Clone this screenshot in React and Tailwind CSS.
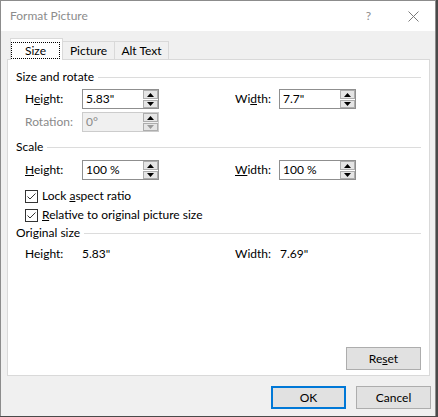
import React from 'react'

const font = "font-['Lato',sans-serif]"

function Arrow({ up, color }) {
  return (
    <svg width="7" height="4" viewBox="0 0 7 4">
      {up ? <path d="M0 4 L3.5 0 L7 4 Z" fill={color} /> : <path d="M0 0 L3.5 4 L7 0 Z" fill={color} />}
    </svg>
  )
}

function SpinBox({ value, disabled, downGray }) {
  return (
    <div
      className={`w-[77px] h-[20px] flex items-center border ${
        disabled ? 'border-[#cccccc] bg-[#f0f0f0]' : 'border-[#8f8f8f] bg-white'
      }`}
    >
      <span className={`flex-1 pl-[3px] leading-none ${disabled ? 'text-[#8a8a8a]' : 'text-black'}`}>{value}</span>
      <div className="flex flex-col w-[15px] h-[18px] gap-px">
        <div className="h-[9px] flex items-center justify-center border border-[#adadad] bg-[#e5e5e5]">
          <Arrow up color="#000" />
        </div>
        <div className="h-[8px] flex items-center justify-center border border-[#adadad] bg-[#e5e5e5]">
          <Arrow color={downGray ? '#9a9a9a' : '#000'} />
        </div>
      </div>
    </div>
  )
}

function Section({ title }) {
  return (
    <div className="flex items-center h-[16px] pl-[8px] pr-[8px] gap-[4px]">
      <span className="text-black">{title}</span>
      <div className="flex-1 h-px bg-[#dcdcdc]" />
    </div>
  )
}

function Check({ children }) {
  return (
    <div className="flex items-center h-[16px] pl-[17px] gap-[4px]">
      <div className="w-[13px] h-[13px] border border-[#333333] bg-white flex items-center justify-center">
        <svg width="11" height="11" viewBox="0 0 11 11">
          <path d="M1.5 5.5 L4 8 L9.5 2.5" fill="none" stroke="#333" strokeWidth="1" />
        </svg>
      </div>
      <span>{children}</span>
    </div>
  )
}

function Btn({ children, primary }) {
  return (
    <div
      className={`w-[75px] h-[23px] flex items-center justify-center bg-[#e1e1e1] ${
        primary ? 'border-2 border-[#0078d7]' : 'border border-[#adadad]'
      }`}
    >
      {children}
    </div>
  )
}

export default function App() {
  return (
    <div className={`w-[438px] h-[417px] bg-[#4a4a4a] text-[12px] text-black ${font}`}>
      <div className="w-[436px] h-[416px] flex flex-col border-l border-t border-r border-[#8c8c8c] bg-[#f0f0f0]">
        {/* Title bar */}
        <div className="h-[30px] bg-white flex items-center pl-[9px] pr-[16px]">
          <span className="flex-1 text-[#8c8c8c]">Format Picture</span>
          <span className="text-[#8c8c8c] mr-[37px]">?</span>
          <svg width="11" height="11" viewBox="0 0 11 11">
            <path d="M0.5 0.5 L10.5 10.5 M10.5 0.5 L0.5 10.5" stroke="#7a7a7a" strokeWidth="1" />
          </svg>
        </div>

        {/* Tabs + panel */}
        <div className="flex flex-col px-[6px]">
          <div className="h-[28px] flex items-end pl-[3px]">
            <div className="relative z-10 -mb-px w-[53px] h-[22px] bg-white border-t border-l border-r border-[#d9d9d9] pt-[3px]">
              <div className="w-[49px] h-[17px] border border-dotted border-black flex items-center justify-center">
                Size
              </div>
            </div>
            <div className="w-[52px] h-[18px] border-t border-r border-[#d9d9d9] flex items-center justify-center">
              Picture
            </div>
            <div className="w-[54px] h-[18px] border-t border-r border-[#d9d9d9] flex items-center justify-center">
              Alt Text
            </div>
          </div>

          <div className="w-[423px] h-[317px] flex flex-col border border-[#d9d9d9] bg-white pt-[9px]">
            <Section title="Size and rotate" />
            <div className="mt-[4px] flex items-center pl-[17px]">
              <div className="w-[210px] flex items-center">
                <span className="w-[57px]">
                  H<u>e</u>ight:
                </span>
                <SpinBox value={'5.83"'} />
              </div>
              <span className="w-[44px]">
                Wi<u>d</u>th:
              </span>
              <SpinBox value={'7.7"'} />
            </div>
            <div className="mt-[3px] flex items-center pl-[17px]">
              <span className="w-[57px] text-[#8a8a8a]">Rotation:</span>
              <SpinBox value="0°" disabled downGray />
            </div>

            <div className="mt-[7px]">
              <Section title="Scale" />
            </div>
            <div className="mt-[5px] flex items-center pl-[17px]">
              <div className="w-[210px] flex items-center">
                <span className="w-[57px]">
                  <u>H</u>eight:
                </span>
                <SpinBox value="100 %" />
              </div>
              <span className="w-[44px]">
                <u>W</u>idth:
              </span>
              <SpinBox value="100 %" />
            </div>

            <div className="mt-[8px]">
              <Check>
                Lock <u>a</u>spect ratio
              </Check>
            </div>
            <div className="mt-[3px]">
              <Check>
                <u>R</u>elative to original picture size
              </Check>
            </div>

            <div className="mt-[2px]">
              <Section title="Original size" />
            </div>
            <div className="mt-[5px] h-[16px] flex items-center pl-[17px]">
              <span className="w-[57px]">Height:</span>
              <span className="w-[153px]">5.83"</span>
              <span className="w-[45px]">Width:</span>
              <span>7.69"</span>
            </div>

            <div className="mt-auto flex justify-end pr-[8px] pb-[5px]">
              <Btn>
                Re<u>s</u>et
              </Btn>
            </div>
          </div>
        </div>

        {/* Bottom buttons */}
        <div className="flex justify-end gap-[10px] pt-[10px] pr-[4px]">
          <Btn primary>OK</Btn>
          <Btn>Cancel</Btn>
        </div>
      </div>
    </div>
  )
}
